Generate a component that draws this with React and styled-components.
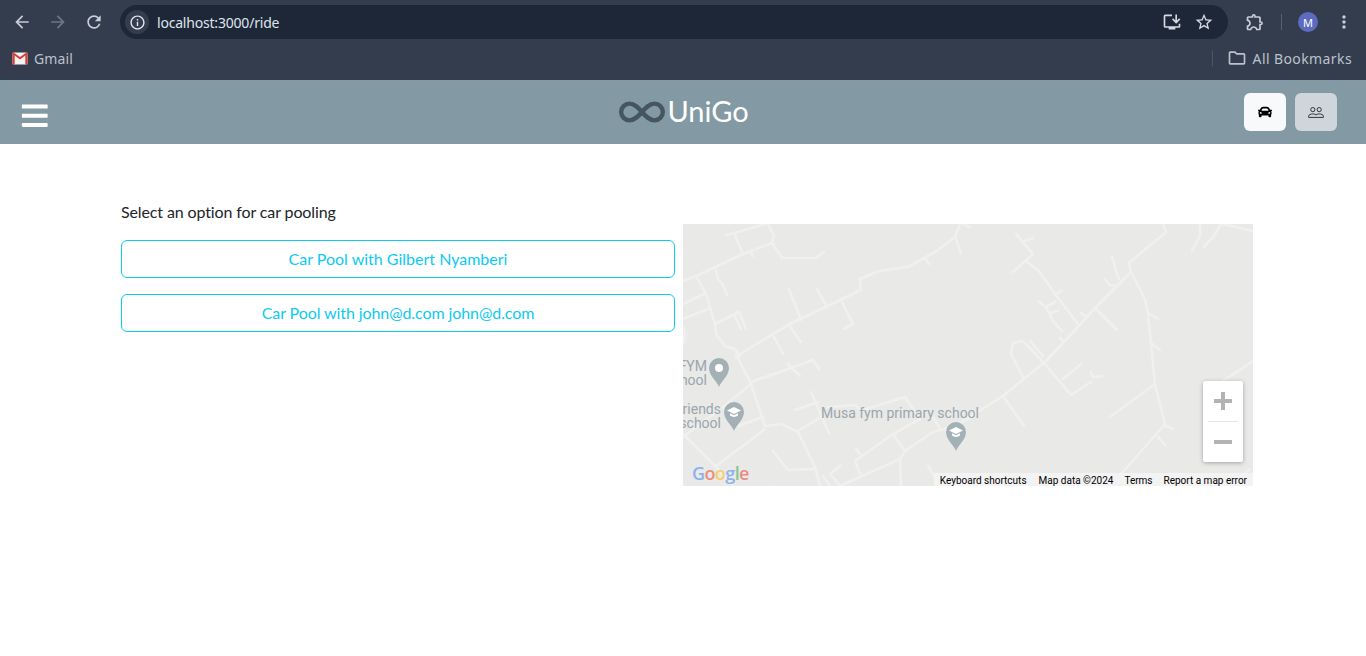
import React from "react";
import styled, { createGlobalStyle } from "styled-components";
import { FaBars, FaCar } from "react-icons/fa";
import {
  MdArrowBack,
  MdArrowForward,
  MdRefresh,
  MdInfoOutline,
  MdInstallDesktop,
  MdStarBorder,
  MdOutlineExtension,
  MdMoreVert,
  MdOutlineFolder,
} from "react-icons/md";
import { Infinity as InfinityIcon } from "lucide-react";

const Global = createGlobalStyle`
  html, body { margin: 0; padding: 0; background: #fff; }
  body { font-family: Lato, "Noto Sans", sans-serif; overflow: hidden; }
  * { box-sizing: border-box; }
`;

const Page = styled.div`
  width: 1366px;
  height: 656px;
  display: flex;
  flex-direction: column;
  background: #fff;
`;

/* Browser chrome */
const BrowserChrome = styled.div`
  height: 80px;
  background: #333d4e;
  color: #c7ccd5;
  font-family: "Noto Sans", sans-serif;
  display: flex;
  flex-direction: column;
`;
const Toolbar = styled.div`
  height: 44px;
  display: flex;
  align-items: center;
  padding: 0 12px;
`;
const NavButton = styled.span`
  width: 20px;
  height: 20px;
  margin-right: ${(p) => p.$gap ?? 16}px;
  display: flex;
  align-items: center;
  justify-content: center;
  color: ${(p) => (p.$muted ? "#6f7786" : "#c9ced7")};
  font-size: 20px;
  flex: none;
`;
const Omnibox = styled.div`
  width: 1108px;
  height: 34px;
  margin-left: -2px;
  margin-right: 17px;
  border-radius: 17px;
  background: #1e2738;
  display: flex;
  align-items: center;
  padding: 0 14px 0 5px;
  flex: none;
`;
const InfoBadge = styled.span`
  width: 24px;
  height: 24px;
  border-radius: 50%;
  background: #333d4e;
  color: #e3e7ee;
  display: flex;
  align-items: center;
  justify-content: center;
  font-size: 17px;
  margin-right: 8px;
`;
const Url = styled.span`
  font-size: 14px;
  color: #dfe4ec;
  flex: 1;
  letter-spacing: -0.2px;
`;
const OmniIcon = styled.span`
  display: flex;
  font-size: 20px;
  color: #d5d9e0;
  margin-left: 12px;
`;
const ToolbarDivider = styled.span`
  width: 1px;
  height: 16px;
  background: #556071;
  margin: 0 16px 0 0;
  flex: none;
`;
const Avatar = styled.span`
  width: 20px;
  height: 20px;
  border-radius: 50%;
  background: #5c6bc0;
  color: #fff;
  font-size: 11px;
  display: flex;
  align-items: center;
  justify-content: center;
  margin-right: 16px;
  flex: none;
`;
const BookmarkBar = styled.div`
  height: 36px;
  display: flex;
  align-items: center;
  padding: 0 14px 8px 12px;
  font-size: 14px;
`;
const Bookmark = styled.span`
  display: flex;
  align-items: center;
  gap: 6px;
  color: #bcc2cc;
  letter-spacing: ${(p) => p.$spacing ?? 0}px;
`;
const BookmarkSpacer = styled.span`
  flex: 1;
`;
const BookmarkDivider = styled.span`
  width: 1px;
  height: 16px;
  background: #4c5666;
  margin-right: 16px;
`;
const FolderIcon = styled(MdOutlineFolder)`
  font-size: 20px;
  margin-left: -2px;
`;

/* App header */
const Header = styled.header`
  height: 64px;
  background: #839aa5;
  display: grid;
  grid-template-columns: 1fr auto 1fr;
  align-items: center;
  padding: 0 29px 0 20px;
  flex: none;
`;
const MenuButton = styled.span`
  display: flex;
  color: #fff;
  font-size: 29.5px;
  padding-top: 7px;
`;
const Logo = styled.div`
  display: flex;
  align-items: center;
  gap: 0;
  color: #fff;
  font-size: 29px;
  line-height: 40px;
  margin-left: 9px;
`;
const LogoText = styled.span`
  position: relative;
  top: -1px;
`;
const HeaderActions = styled.div`
  display: flex;
  justify-content: flex-end;
  gap: 9px;
`;
const ModeButton = styled.span`
  width: 42px;
  height: 38px;
  border-radius: 6px;
  background: ${(p) => (p.$active ? "#f8f9fa" : "#ced6db")};
  color: ${(p) => (p.$active ? "#000" : "#333")};
  display: flex;
  align-items: center;
  justify-content: center;
  font-size: 14px;
`;

/* Content */
const Main = styled.main`
  width: 1140px;
  margin: 0 auto;
  padding-top: 58px;
  display: grid;
  grid-template-columns: 570px 570px;
`;
const Options = styled.section`
  padding: 0 8px;
  display: flex;
  flex-direction: column;
`;
const Title = styled.p`
  margin: 0 0 18px;
  font-size: 16px;
  line-height: 20px;
  height: 20px;
  color: #212529;
  letter-spacing: -0.12px;
`;
const PoolButton = styled.button`
  height: 38px;
  margin-bottom: 16px;
  border: 1px solid #0dcaf0;
  border-radius: 6px;
  background: transparent;
  color: #0dcaf0;
  font: 16px/24px Lato, sans-serif;
  letter-spacing: ${(p) => p.$spacing ?? 0}px;
  padding: 0 12px;
`;
const MapPanel = styled.div`
  margin-top: 22px;
  height: 262px;
  background: #e9e9e7;
  position: relative;
  overflow: hidden;
`;
const MapDrawing = styled.svg`
  position: absolute;
  inset: 0;
  width: 100%;
  height: 100%;
`;
const ZoomControl = styled.div`
  position: absolute;
  top: 157px;
  right: 10px;
  width: 40px;
  height: 81px;
  background: #fff;
  border-radius: 2px;
  box-shadow: 0 1px 4px rgba(0, 0, 0, 0.3);
  display: flex;
  flex-direction: column;
`;
const ZoomButton = styled.span`
  height: 40px;
  position: relative;
  &::before,
  &::after {
    content: "";
    position: absolute;
    background: #b3b3b3;
  }
  &::before {
    left: 11px;
    top: 18px;
    width: 18px;
    height: 4px;
  }
  &::after {
    display: ${(p) => (p.$plus ? "block" : "none")};
    left: 18px;
    top: 11px;
    width: 4px;
    height: 18px;
  }
`;
const ZoomDivider = styled.span`
  height: 1px;
  margin: 0 5px;
  background: #e6e6e6;
`;
const Attribution = styled.div`
  position: absolute;
  right: 0;
  bottom: 0;
  height: 13px;
  display: flex;
  align-items: center;
  background: rgba(245, 245, 245, 0.85);
  font: 10px/13px Roboto, Arial, sans-serif;
  color: #000;
`;
const AttributionItem = styled.span`
  padding: 1px 6px 0 ${(p) => p.$left ?? 6}px;
  white-space: nowrap;
`;
const GoogleMark = styled.div`
  position: absolute;
  left: 9px;
  bottom: 2px;
  font: 600 18px/22px "Open Sans", Roboto, sans-serif;
  letter-spacing: -0.6px;
  opacity: 0.55;
`;
const Letter = styled.span`
  color: ${(p) => p.$c};
`;

const roads = [
  "0,57 13,52 60,30 89,19 91,12 85,0",
  "89,19 99,34 133,34 141,28",
  "60,30 51,9 43,11",
  "51,9 82,0",
  "68,29 70,32",
  "32,43 35,55 40,61 44,71",
  "13,52 23,70 32,100 33,110 42,122 52,125 57,132",
  "0,80 21,70",
  "0,95 25,85",
  "0,103 2,110 0,120",
  "32,100 56,88 63,105",
  "52,92 58,105",
  "106,65 118,96",
  "134,65 144,83",
  "53,133 70,122 107,100 178,66 177,55 196,47 225,43 252,28 272,13 279,-5",
  "159,78 170,100 161,105",
  "105,100 118,118",
  "91,113 100,130",
  "272,13 278,29",
  "242,34 246,40",
  "277,-2 286,3",
  "333,10 350,30 330,48",
  "342,17 350,14",
  "343,37 356,47 372,70 395,100",
  "372,71 379,66",
  "355,77 363,83 370,97 379,107",
  "363,83 372,78",
  "367,89 375,87",
  "483,8 480,0",
  "280,197 320,172 363,137 395,103 413,83 448,48 446,39 483,8",
  "448,48 462,75 465,90 472,160 482,200 447,240 427,262",
  "465,89 475,95",
  "468,119 477,126",
  "429,32 433,47 436,55",
  "422,55 427,61 433,62",
  "413,85 434,106",
  "398,89 404,93",
  "377,114 380,117",
  "328,130 330,119 339,117 343,120 360,138 388,171 408,158",
  "347,117 360,132",
  "328,130 340,153",
  "380,155 398,140",
  "408,148 410,153 419,152",
  "320,172 341,202",
  "472,160 427,193",
  "482,202 490,205",
  "475,213 482,221",
  "540,157 570,137",
  "547,262 567,245",
  "517,0 517,12 509,27",
  "538,0 530,13 521,23",
  "540,0 570,7",
  "53,130 68,160 82,202",
  "68,158 105,145 130,136 136,145",
  "105,140 117,152",
  "68,160 40,183 0,213",
  "55,202 80,193",
  "82,202 98,200 115,208 132,243 137,262",
  "82,205 33,242",
  "0,210 33,243 50,262",
  "128,168 146,209",
  "112,186 135,178",
  "115,207 138,193",
  "145,183 173,181 177,187 222,173 237,195 210,210 172,237 177,250",
  "210,210 222,227",
  "222,227 250,208 263,205 290,193",
  "250,193 258,206",
  "173,225 177,230",
  "157,242 147,250 157,262",
  "157,262 217,235 222,227",
  "217,235 218,262",
  "90,227 105,246 132,245",
  "140,252 147,262",
  "245,242 257,262",
  "88,262 80,267",
];

const Pin = ({ x, y, school }) => (
  <g transform={`translate(${x} ${y})`}>
    <path d="M0 19C-2 13-10 8-10 0a10 10 0 0 1 20 0C10 8 2 13 0 19Z" fill="#a3b1b7" />
    {school ? (
      <g fill="#fff">
        <path d="M-7-1.5 0-5 7-1.5 0 2Z" />
        <path d="M-4 1.2V3.6Q0 6.4 4 3.6V1.2L0 3.2Z" />
      </g>
    ) : (
      <circle r="4" fill="#fff" />
    )}
  </g>
);

const RoadMap = () => (
  <MapDrawing viewBox="0 0 570 262">
    <g fill="none" stroke="#f0f0ef" strokeWidth="2.6" strokeLinecap="round" strokeLinejoin="round">
      {roads.map((r) => (
        <polyline key={r} points={r} />
      ))}
    </g>
    <Pin x={36} y={144} />
    <Pin x={51} y={188} school />
    <Pin x={273} y={208} school />
    <g fontFamily="Roboto, sans-serif" fontSize="14" fill="#9aa6ad">
      <text x="24" y="147" textAnchor="end">FYM</text>
      <text x="24" y="161" textAnchor="end">hool</text>
      <text x="38" y="190" textAnchor="end">riends</text>
      <text x="38" y="204" textAnchor="end">school</text>
      <text x="138" y="194">Musa fym primary school</text>
    </g>
  </MapDrawing>
);

const GmailIcon = () => (
  <svg width="16" height="13" viewBox="0 0 16 13">
    <rect x="0.5" y="0.5" width="15" height="12" rx="1.2" fill="#f3f3f3" />
    <path d="M0.5 2 8 7.5 15.5 2V1.5A1 1 0 0 0 14 .7L8 5 2 .7A1 1 0 0 0 .5 1.5Z" fill="#d9403a" />
    <rect x="0.5" y="2" width="2.2" height="10.5" fill="#d9403a" />
    <rect x="13.3" y="2" width="2.2" height="10.5" fill="#d9403a" />
  </svg>
);

const PeopleIcon = () => (
  <svg width="16" height="11" viewBox="0 0 16 11" fill="none" stroke="#333" strokeWidth="1">
    <circle cx="4.8" cy="2.6" r="2.1" />
    <circle cx="11.2" cy="2.6" r="2.1" />
    <path d="M.6 10.4V9.2c0-1.5 2.4-2.3 4.2-2.3 1.3 0 2.5.4 3.2 1 .7-.6 1.9-1 3.2-1 1.8 0 4.2.8 4.2 2.3v1.2Z" />
  </svg>
);

export default function App() {
  return (
    <Page>
      <Global />
      <BrowserChrome>
        <Toolbar>
          <NavButton><MdArrowBack /></NavButton>
          <NavButton $muted><MdArrowForward /></NavButton>
          <NavButton $gap={18}><MdRefresh /></NavButton>
          <Omnibox>
            <InfoBadge><MdInfoOutline /></InfoBadge>
            <Url>localhost:3000/ride</Url>
            <OmniIcon><MdInstallDesktop /></OmniIcon>
            <OmniIcon><MdStarBorder /></OmniIcon>
          </Omnibox>
          <NavButton><MdOutlineExtension /></NavButton>
          <ToolbarDivider />
          <Avatar>M</Avatar>
          <NavButton $gap={0}><MdMoreVert /></NavButton>
        </Toolbar>
        <BookmarkBar>
          <Bookmark $spacing={0.1}><GmailIcon />Gmail</Bookmark>
          <BookmarkSpacer />
          <BookmarkDivider />
          <Bookmark $spacing={0.4}><FolderIcon />All Bookmarks</Bookmark>
        </BookmarkBar>
      </BrowserChrome>
      <Header>
        <MenuButton><FaBars /></MenuButton>
        <Logo>
          <InfinityIcon size={50} color="#46565e" strokeWidth={2.1} />
          <LogoText>UniGo</LogoText>
        </Logo>
        <HeaderActions>
          <ModeButton $active><FaCar /></ModeButton>
          <ModeButton><PeopleIcon /></ModeButton>
        </HeaderActions>
      </Header>
      <Main>
        <Options>
          <Title>Select an option for car pooling</Title>
          <PoolButton>Car Pool with Gilbert Nyamberi</PoolButton>
          <PoolButton $spacing={-0.085}>Car Pool with john@d.com john@d.com</PoolButton>
        </Options>
        <MapPanel>
          <RoadMap />
          <GoogleMark>
            <Letter $c="#4285f4">G</Letter>
            <Letter $c="#ea4335">o</Letter>
            <Letter $c="#fbbc05">o</Letter>
            <Letter $c="#4285f4">g</Letter>
            <Letter $c="#34a853">l</Letter>
            <Letter $c="#ea4335">e</Letter>
          </GoogleMark>
          <ZoomControl>
            <ZoomButton $plus />
            <ZoomDivider />
            <ZoomButton />
          </ZoomControl>
          <Attribution>
            <AttributionItem>Keyboard shortcuts</AttributionItem>
            <AttributionItem>Map data ©2024</AttributionItem>
            <AttributionItem $left={5}>Terms</AttributionItem>
            <AttributionItem $left={5}>Report a map error</AttributionItem>
          </Attribution>
        </MapPanel>
      </Main>
    </Page>
  );
}
